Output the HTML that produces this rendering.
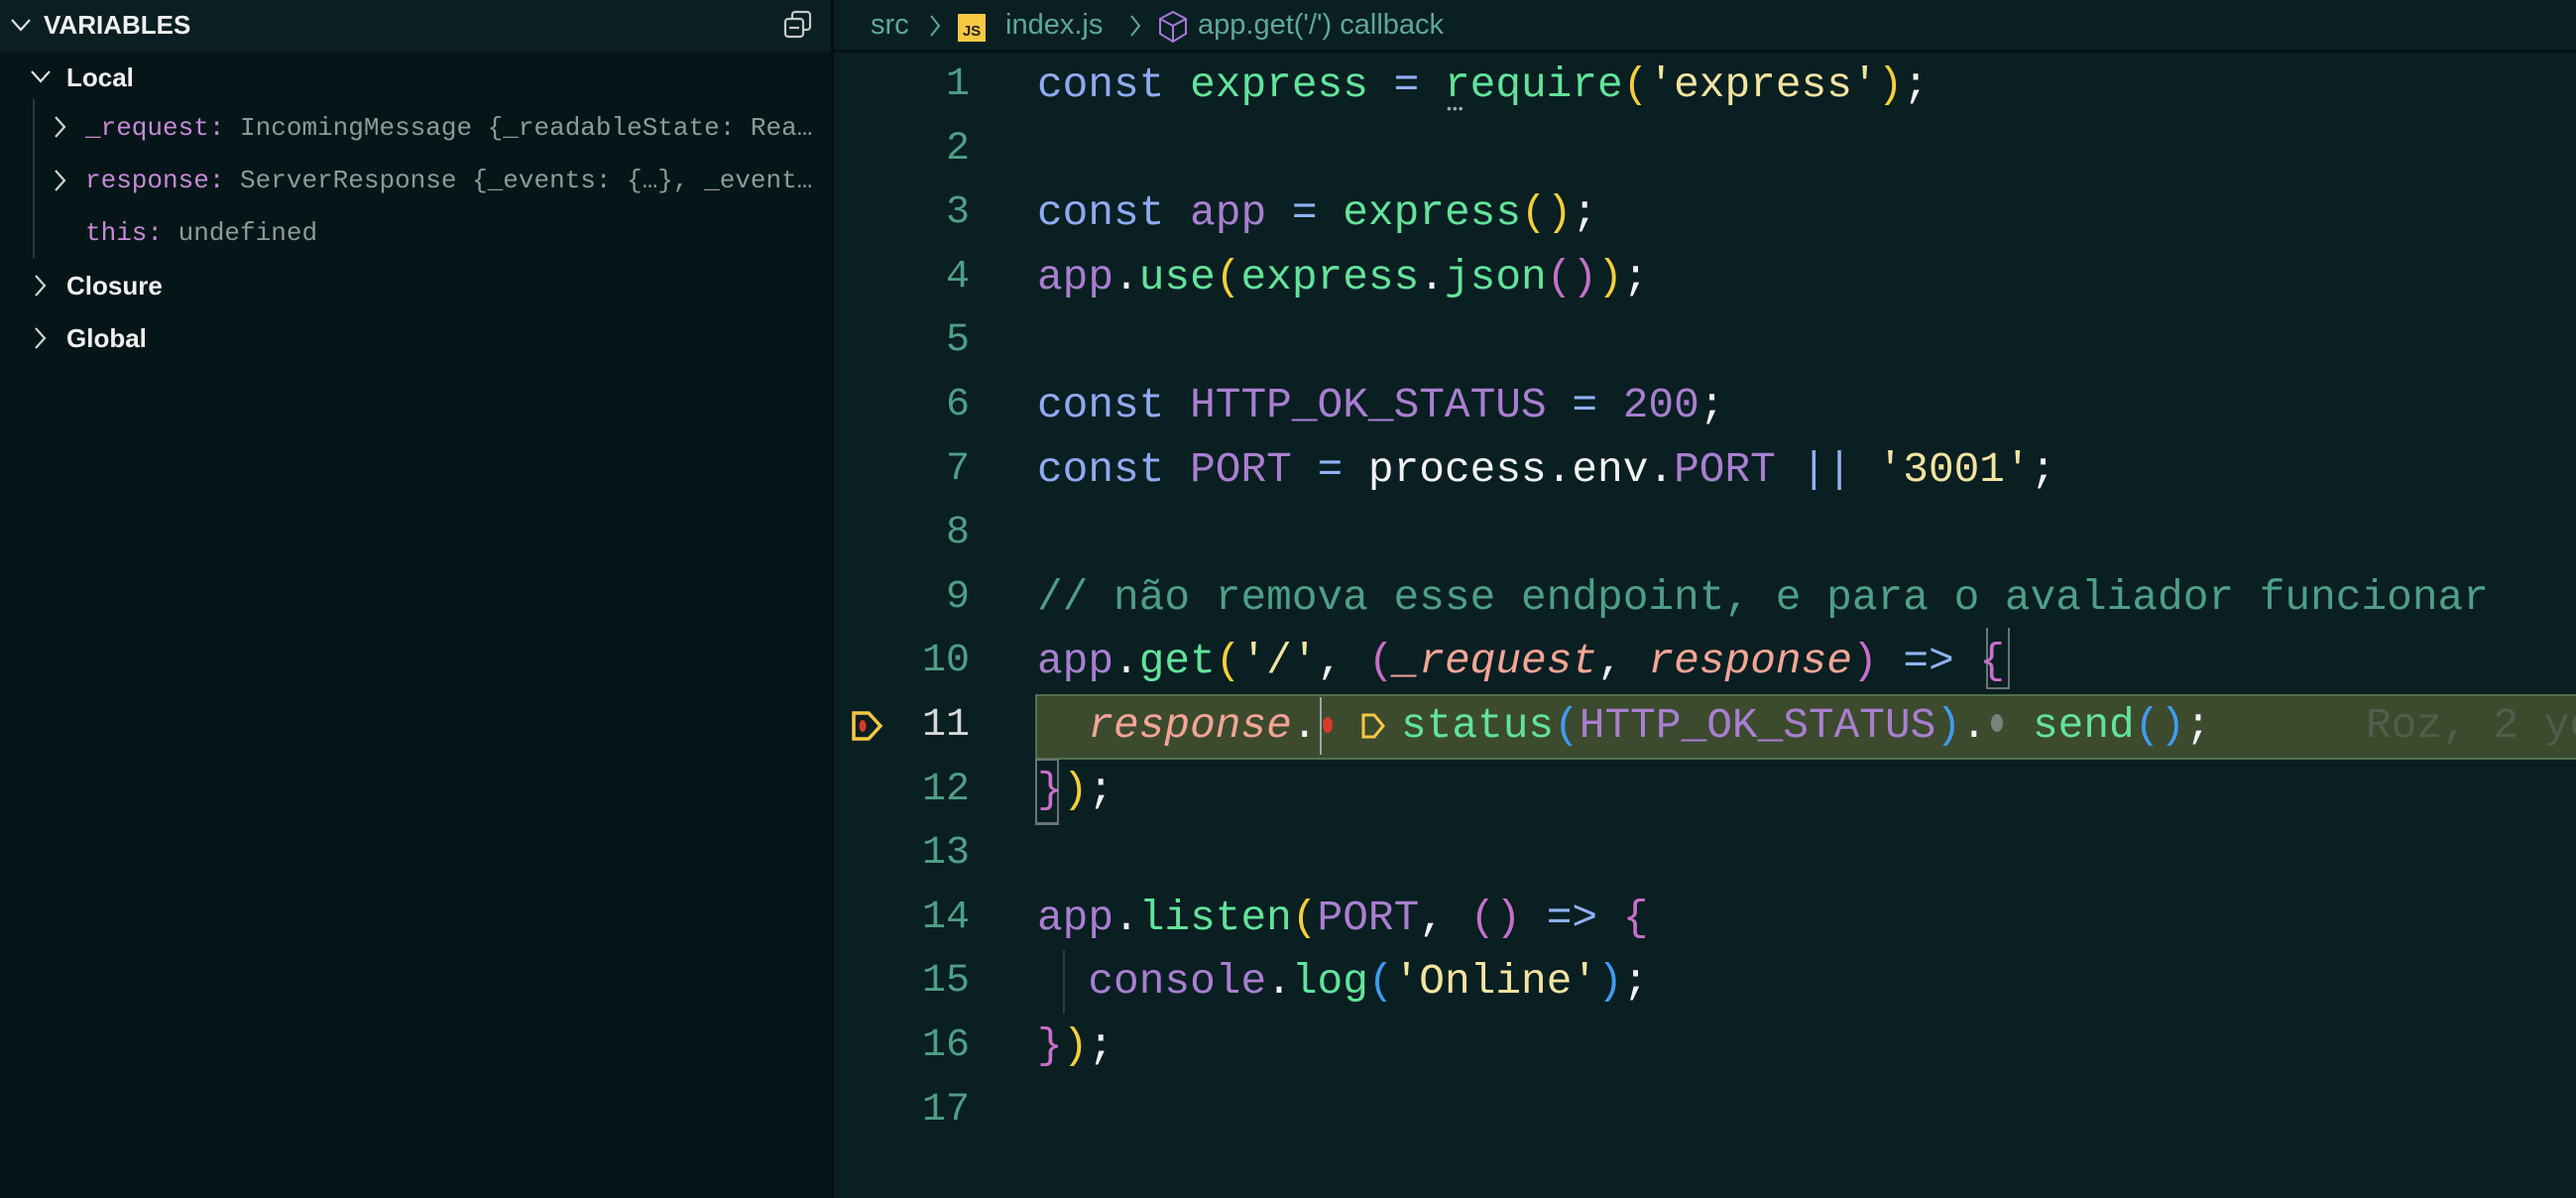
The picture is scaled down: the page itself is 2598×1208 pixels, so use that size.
<!DOCTYPE html>
<html><head><meta charset="utf-8"><style>
html,body{margin:0;padding:0;width:2598px;height:1208px;overflow:hidden;background:#0a1f22;}
#side{position:absolute;left:0;top:0;width:838px;height:1208px;background:#061618;}
#sidehead{position:absolute;left:0;top:0;width:838px;height:52px;background:#0a1f22;}
#sep{position:absolute;left:838px;top:0;width:3px;height:1208px;background:#041011;}
.st{position:absolute;font-family:"Liberation Sans",sans-serif;font-size:26px;color:#f0f0f0;font-weight:bold;white-space:pre;}
.sm{position:absolute;font-family:"Liberation Mono",monospace;font-size:26px;color:#8f9a98;white-space:pre;line-height:30px;}
.k{color:#c58ad8}
#bc{position:absolute;left:841px;top:0;width:1757px;height:50px;background:#0a1f22;border-bottom:3px solid #051314;font-family:"Liberation Sans",sans-serif;font-size:29px;color:#5ea899;overflow:hidden;}
.ln{position:absolute;width:140px;left:838px;text-align:right;font-family:"Liberation Mono",monospace;font-size:40px;color:#4f9e8a;line-height:64px;}
.cl{position:absolute;left:1046px;font-family:"Liberation Mono",monospace;font-size:42.8px;line-height:64px;white-space:pre;color:#f2f2f2;}
.kw{color:#8eaaf3}.fn{color:#62e39b}.pu{color:#a97fd0}.st2{color:#f2e4a0}.py{color:#f5cf3a}.pm{color:#c86fcb}.pb{color:#3f9cf0}.ar{color:#8fb3f5}.pa{color:#f3a595;font-style:italic}.cm{color:#4f9e8a}
</style></head><body>
<div id="side"></div>
<div id="sidehead"></div>
<div id="sep"></div>
<svg style="position:absolute;left:10px;top:16px" width="22" height="18"><path d="M2 4 L11 14 L20 4" stroke="#e0e0e0" stroke-width="2.2" fill="none"/></svg>
<div class="st" style="left:44px;top:10px;">VARIABLES</div>
<svg style="position:absolute;left:790px;top:10px" width="30" height="30"><rect x="9" y="2" width="18" height="18" rx="3" stroke="#c8c8c8" stroke-width="2.2" fill="none"/><rect x="2" y="9" width="18" height="18" rx="3" stroke="#c8c8c8" stroke-width="2.2" fill="#0a1f22"/><line x1="6" y1="18" x2="16" y2="18" stroke="#c8c8c8" stroke-width="2.2"/></svg>

<svg style="position:absolute;left:30px;top:68px" width="22" height="18"><path d="M2 4 L11 14 L20 4" stroke="#e0e0e0" stroke-width="2.2" fill="none"/></svg>
<div class="st" style="left:67px;top:63px;">Local</div>
<div style="position:absolute;left:33px;top:100px;width:2px;height:160px;background:#2a3a3a"></div>
<svg style="position:absolute;left:52px;top:116px" width="16" height="24"><path d="M4 2 L13 12 L4 22" stroke="#d0d0d0" stroke-width="2.2" fill="none"/></svg>
<div class="sm" style="left:86px;top:114px;"><span class="k">_request:</span> IncomingMessage {_readableState: Rea…</div>
<svg style="position:absolute;left:52px;top:170px" width="16" height="24"><path d="M4 2 L13 12 L4 22" stroke="#d0d0d0" stroke-width="2.2" fill="none"/></svg>
<div class="sm" style="left:86px;top:167px;"><span class="k">response:</span> ServerResponse {_events: {…}, _event…</div>
<div class="sm" style="left:86px;top:220px;"><span class="k">this:</span> undefined</div>
<svg style="position:absolute;left:32px;top:276px" width="16" height="24"><path d="M4 2 L13 12 L4 22" stroke="#d0d0d0" stroke-width="2.2" fill="none"/></svg>
<div class="st" style="left:67px;top:273px;">Closure</div>
<svg style="position:absolute;left:32px;top:329px" width="16" height="24"><path d="M4 2 L13 12 L4 22" stroke="#d0d0d0" stroke-width="2.2" fill="none"/></svg>
<div class="st" style="left:67px;top:326px;">Global</div>

<div id="bc">
<span style="position:absolute;left:37px;top:9px;">src</span>
<svg style="position:absolute;left:95px;top:14px" width="14" height="24"><path d="M3 2 L11 12 L3 22" stroke="#5ea899" stroke-width="2" fill="none"/></svg>
<div style="position:absolute;left:125px;top:14px;width:28px;height:28px;background:#f5c842;color:#222;font-size:15px;font-weight:bold;text-align:center;line-height:36px;">JS</div>
<span style="position:absolute;left:173px;top:9px;">index.js</span>
<svg style="position:absolute;left:297px;top:14px" width="14" height="24"><path d="M3 2 L11 12 L3 22" stroke="#5ea899" stroke-width="2" fill="none"/></svg>
<svg style="position:absolute;left:326px;top:10px" width="32" height="34"><path d="M16 2 L29 9 L29 24 L16 32 L3 24 L3 9 Z M3 9 L16 16 L29 9 M16 16 L16 32" stroke="#a878d8" stroke-width="2" fill="none"/></svg>
<span style="position:absolute;left:367px;top:9px;">app.get('/') callback</span>
</div>

<div style="position:absolute;left:1044px;top:700px;width:1554px;height:62px;background:#3c4a2e;border:2px solid #52704f;border-right:none;box-sizing:content-box;"></div>
<div style="position:absolute;left:2003px;top:633px;width:20px;height:60px;border:2px solid #6b7575;border-top:none;"></div>
<div style="position:absolute;left:1044px;top:765px;width:20px;height:62px;border:2px solid #6b7575;border-bottom:3px solid #6b7575"></div>
<div style="position:absolute;left:1072px;top:958px;width:2px;height:64px;background:#2d3f3f"></div>

<div class="ln" style="top:54px">1</div>
<div class="ln" style="top:118.6px">2</div>
<div class="ln" style="top:183.2px">3</div>
<div class="ln" style="top:247.8px">4</div>
<div class="ln" style="top:312.4px">5</div>
<div class="ln" style="top:377px">6</div>
<div class="ln" style="top:441.6px">7</div>
<div class="ln" style="top:506.2px">8</div>
<div class="ln" style="top:570.8px">9</div>
<div class="ln" style="top:635.4px">10</div>
<div class="ln" style="top:700px;color:#d8d8d8">11</div>
<div class="ln" style="top:764.6px">12</div>
<div class="ln" style="top:829.2px">13</div>
<div class="ln" style="top:893.8px">14</div>
<div class="ln" style="top:958.4px">15</div>
<div class="ln" style="top:1023px">16</div>
<div class="ln" style="top:1087.6px">17</div>

<svg style="position:absolute;left:858px;top:716px" width="34" height="32"><path d="M3 3 L18 3 L30 16 L18 29 L3 29 Z" stroke="#f5c842" stroke-width="3.5" fill="none"/><ellipse cx="12" cy="16" rx="3.5" ry="6" fill="#d83a2a"/></svg>

<div class="cl" style="top:54px"><span class="kw">const</span> <span class="fn">express</span> <span class="ar">=</span> <span class="fn">require</span><span class="py">(</span><span class="st2">'express'</span><span class="py">)</span>;</div>
<div style="position:absolute;left:1459px;top:101px;font-size:14px;color:#9aa;letter-spacing:1px;font-family:'Liberation Sans',sans-serif">•••</div>
<div class="cl" style="top:183.2px"><span class="kw">const</span> <span class="pu">app</span> <span class="ar">=</span> <span class="fn">express</span><span class="py">()</span>;</div>
<div class="cl" style="top:247.8px"><span class="pu">app</span>.<span class="fn">use</span><span class="py">(</span><span class="fn">express</span>.<span class="fn">json</span><span class="pm">()</span><span class="py">)</span>;</div>
<div class="cl" style="top:377px"><span class="kw">const</span> <span class="pu">HTTP_OK_STATUS</span> <span class="ar">=</span> <span class="pu">200</span>;</div>
<div class="cl" style="top:441.6px"><span class="kw">const</span> <span class="pu">PORT</span> <span class="ar">=</span> process.env.<span class="pu">PORT</span> <span class="ar">||</span> <span class="st2">'3001'</span>;</div>
<div class="cl cm" style="top:570.8px">// não remova esse endpoint, e para o avaliador funcionar</div>
<div class="cl" style="top:635.4px"><span class="pu">app</span>.<span class="fn">get</span><span class="py">(</span><span class="st2">'/'</span>, <span class="pm">(</span><span class="pa">_request</span>, <span class="pa">response</span><span class="pm">)</span> <span class="ar">=&gt;</span> <span class="pm">{</span></div>
<div class="cl" style="top:700px">  <span class="pa">response</span>.</div>
<div style="position:absolute;left:1331px;top:703px;width:2px;height:58px;background:#9aa"></div>
<div style="position:absolute;left:1334px;top:723px;width:10px;height:16px;border-radius:50%;background:#d83a2a"></div>
<svg style="position:absolute;left:1372px;top:717px" width="26" height="30"><path d="M3 4 L14 4 L23 15 L14 26 L3 26 Z" stroke="#f5c842" stroke-width="3" fill="none"/></svg>
<div class="cl" style="top:700px;left:1413px"><span class="fn">status</span><span class="pb">(</span><span class="pu">HTTP_OK_STATUS</span><span class="pb">)</span>.</div>
<div style="position:absolute;left:2008px;top:720px;width:12px;height:18px;border-radius:50%;background:#7a827a"></div>
<div class="cl" style="top:700px;left:2050px"><span class="fn">send</span><span class="pb">()</span>;</div>
<div class="cl" style="top:700px;left:2386px;width:212px;overflow:hidden;color:#525e4c">Roz, 2 ye</div>
<div class="cl" style="top:764.6px"><span class="pm">}</span><span class="py">)</span>;</div>
<div class="cl" style="top:893.8px"><span class="pu">app</span>.<span class="fn">listen</span><span class="py">(</span><span class="pu">PORT</span>, <span class="pm">()</span> <span class="ar">=&gt;</span> <span class="pm">{</span></div>
<div class="cl" style="top:958.4px">  <span class="pu">console</span>.<span class="fn">log</span><span class="pb">(</span><span class="st2">'Online'</span><span class="pb">)</span>;</div>
<div class="cl" style="top:1023px"><span class="pm">}</span><span class="py">)</span>;</div>
</body></html>
